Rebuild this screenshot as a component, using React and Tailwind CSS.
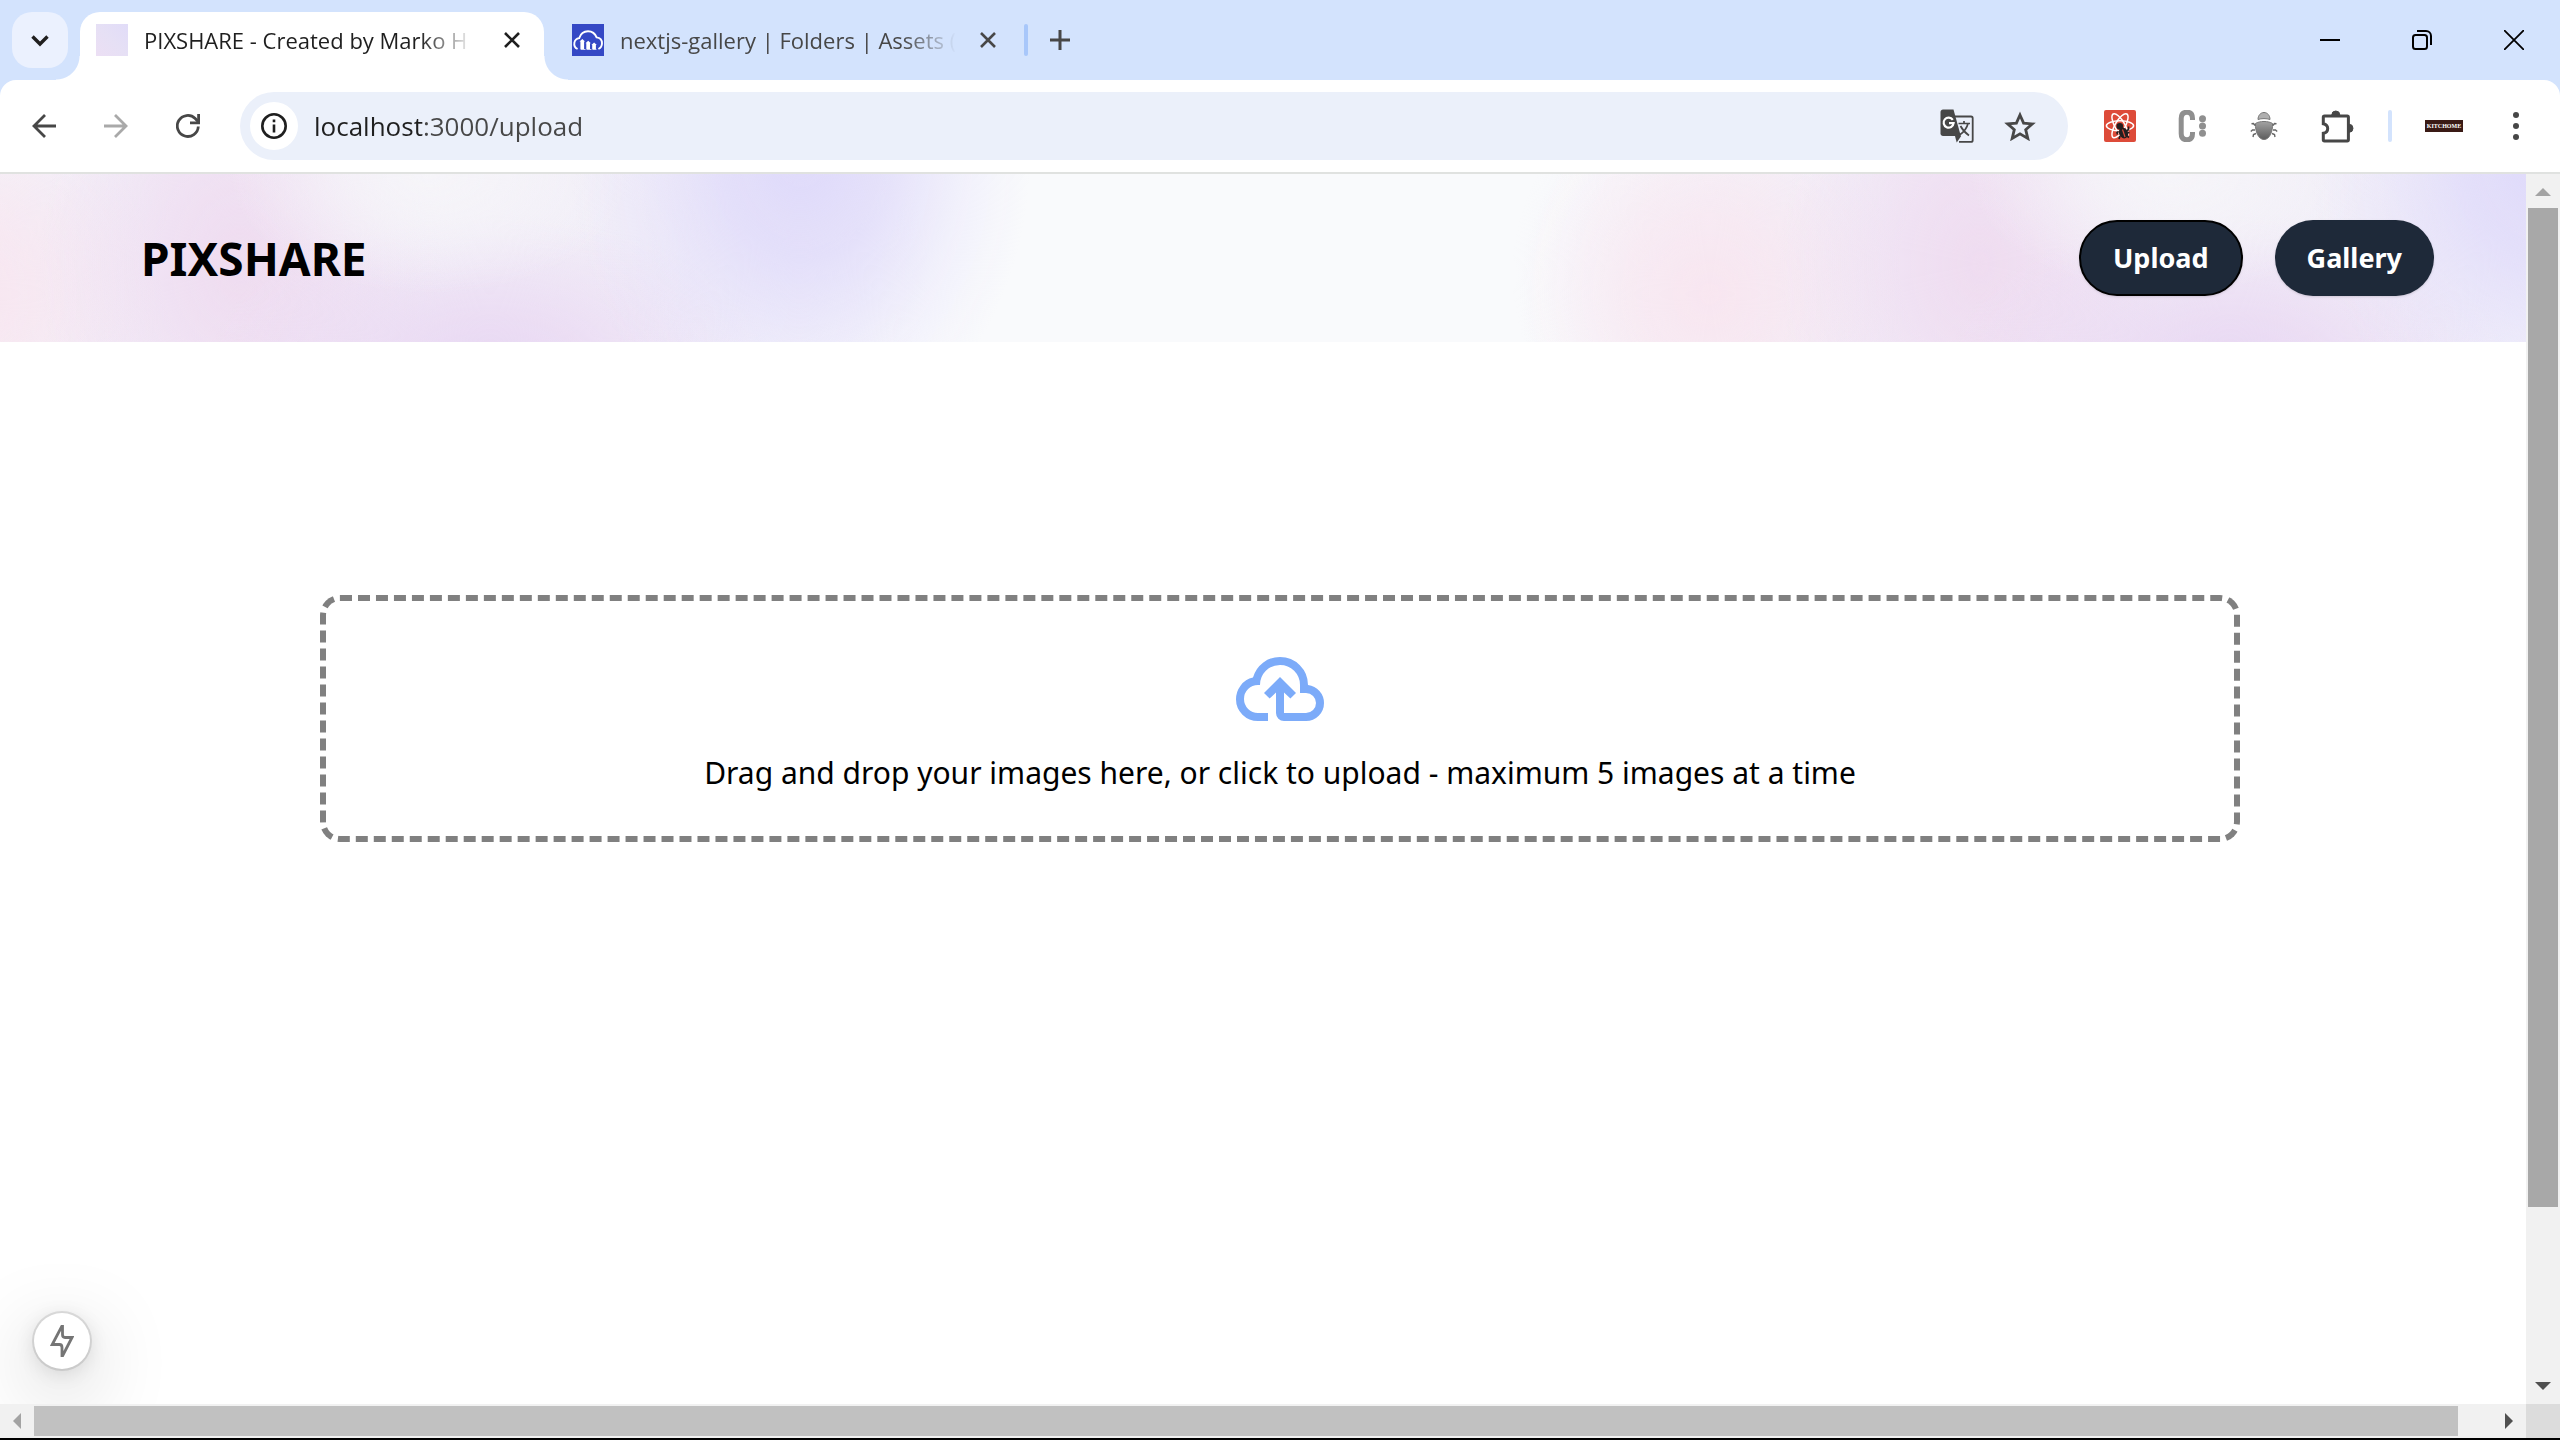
import React from "react";

function ChevronDown() {
  return (
    <svg viewBox="0 0 24 24" className="size-6" fill="none" stroke="#1f1f1f" strokeWidth="3.4">
      <path d="M4.5 8.5 12 16l7.5-7.5" />
    </svg>
  );
}

function Cross({ color }) {
  return (
    <svg viewBox="0 0 16 16" className="size-4" fill="none" stroke={color} strokeWidth="2.6">
      <path d="M1 1l14 14M15 1 1 15" />
    </svg>
  );
}

function CloudTile() {
  return (
    <svg viewBox="0 0 32 32" className="size-8 shrink-0">
      <rect width="32" height="32" fill="#3448c5" />
      <path
        d="M5.6 25C2.6 23.6 2 20.700 2.400 18.600c.5-2.600 2.300-4.100 4.800-4.500C8.600 9.800 11.800 7.200 16 7.200c4 0 7.200 2.400 8.600 6.200 3.200.4 5.400 2.800 5.400 5.900 0 2.700-1.400 4.700-3.600 5.700"
        fill="none"
        stroke="#fff"
        strokeWidth="1.900"
      />
      <path
        d="M10.300 15 13 17.500h-.9v7.500h1.400v.8H9.200c-.5 0-.8-.3-.8-.8v-7.500h-.9zM16.200 16.800l2.700 2.500H18V25h1.400v.8h-4.300c-.5 0-.8-.3-.8-.8v-5.700h-.8zM22.100 18.600l2.700 2.500h-.9V25h.5v.8h-3.400c-.5 0-.8-.3-.8-.8v-3.900h-.8z"
        fill="#fff"
      />
    </svg>
  );
}

function Arrow({ color, flip }) {
  return (
    <svg
      viewBox="0 0 24 24"
      className={flip ? "size-6 rotate-180" : "size-6"}
      fill="none"
      stroke={color}
      strokeWidth="2.800"
    >
      <path d="M24 12H2M13 1 2 12l11 11" />
    </svg>
  );
}

function Reload() {
  return (
    <svg viewBox="0 0 24 24" className="size-6" fill="none" stroke="#474747" strokeWidth="2.800">
      <path d="M22.300 12.500a10.500 10.500 0 1 1-3.100-8L22.500 8" />
      <path d="M22.600 0v8.800H14" />
    </svg>
  );
}

function Info() {
  return (
    <svg viewBox="0 0 26 26" className="size-[26px]" fill="none" stroke="#1f1f1f" strokeWidth="2.600">
      <circle cx="13" cy="13" r="11.700" />
      <path d="M13 11.500v8M13 6.500v2.800" />
    </svg>
  );
}

function Translate() {
  return (
    <svg viewBox="0 0 34 34" className="size-[34px]">
      <path d="M15 7.500h16c1 0 1.700.7 1.700 1.700v22c0 1-.7 1.700-1.700 1.700H19" fill="none" stroke="#474747" strokeWidth="1.800" />
      <path d="M3 .5h10.500l7.300 26.500H3c-1.400 0-2.500-1.100-2.500-2.500V3C.5 1.600 1.600.5 3 .5z" fill="#474747" />
      <path d="M15 27h6.200l-4.500 6.500z" fill="#474747" />
      <path d="M12.800 10.800a5 5 0 1 0 .8 3.400H9" fill="none" stroke="#fff" strokeWidth="2.200" />
      <path d="M18.500 14.500h11.500M24 12v2.500M28 14.500c-1.200 5-4 8.500-8.500 11.500M20.500 17c2 4 5 7 8.500 9.500" fill="none" stroke="#474747" strokeWidth="1.700" />
    </svg>
  );
}

function Star() {
  return (
    <svg viewBox="0 0 32 30" className="h-[30px] w-8">
      <path
        d="m16 4 3.600 8.100 8.800.8-6.700 5.800 2.100 8.700-7.800-4.600-7.800 4.600 2.100-8.700-6.700-5.800 8.800-.8z"
        fill="none"
        stroke="#474747"
        strokeWidth="2.800"
      />
    </svg>
  );
}

function ReactBug() {
  return (
    <svg viewBox="0 0 32 32" className="size-8">
      <rect width="32" height="32" rx="2" fill="#dd4b39" />
      <g fill="none" stroke="#fff" strokeWidth="1.500">
        <ellipse cx="16" cy="15.800" rx="13.600" ry="5" />
        <ellipse cx="16" cy="15.800" rx="13.600" ry="5" transform="rotate(60 16 15.800)" />
        <ellipse cx="16" cy="15.800" rx="13.600" ry="5" transform="rotate(120 16 15.800)" />
      </g>
      <path d="M14 21h9.500l1.500 8h-7z" fill="#dd4b39" />
      <g fill="#231f20" stroke="#231f20" strokeWidth="1.600">
        <circle cx="15.800" cy="16.300" r="2.500" />
        <ellipse cx="19.500" cy="23" rx="3.600" ry="4.800" transform="rotate(-24 19.500 23)" />
        <path d="m14.500 21.500-1.500 1 .5 2M16 26l-1 3M24.500 16.500v3l-2 1.500M25.500 22.500l-2 .5M23 26l2 1.500" fill="none" />
      </g>
      <path d="m18.500 19.500 2.500 7.500" stroke="#dd4b39" strokeWidth="1.200" />
    </svg>
  );
}

function CDots() {
  return (
    <svg viewBox="0 0 28 32" className="h-8 w-7">
      <path
        d="M14.500 10V8.500c0-4-1.700-6.300-5.500-6.300S3.200 4.500 3.200 8.500v15c0 4 2 6.300 5.800 6.300s5.500-2.300 5.500-6.300V22"
        fill="none"
        stroke="#8f8f8f"
        strokeWidth="5"
      />
      <g fill="#8f8f8f">
        <circle cx="24.500" cy="8.800" r="3.500" />
        <circle cx="24.500" cy="16" r="3.500" />
        <circle cx="24.500" cy="23.200" r="3.500" />
      </g>
    </svg>
  );
}

function Beetle() {
  return (
    <svg viewBox="0 0 28 30" className="h-[30px] w-7">
      <defs>
        <linearGradient id="shell" x1="0" y1="0" x2="0" y2="1">
          <stop offset="0" stopColor="#a3a3a3" />
          <stop offset="1" stopColor="#5c5c5c" />
        </linearGradient>
      </defs>
      <path d="M8 8.500C8 4.500 10.500 1.500 14 1.500s6 3 6 7c-3.500-1.200-8.500-1.200-12 0z" fill="#b0b0b0" stroke="#777" />
      <path d="M5.500 12.500c4-2.700 13-2.700 17 0 .5 8-3 16-8.500 16s-9-8-8.500-16z" fill="url(#shell)" stroke="#777" />
      <path
        d="M5 14.500 3.500 12.500l-2 .3M5 19H2.500L.8 20.500M6 22.500l-2.500 1-.5 2.500M23 14.500l1.500-2 2 .3M23 19h2.500l1.700 1.500M22 22.500l2.500 1 .5 2.500"
        fill="none"
        stroke="#666"
        strokeWidth="1.400"
      />
    </svg>
  );
}

function Puzzle() {
  return (
    <svg viewBox="0 0 33 33" className="size-[33px]">
      <path
        d="M3.500 6h22.700c.7 0 1.200.5 1.200 1.200v22.600c0 .7-.5 1.200-1.200 1.200H3.500c-.7 0-1.200-.5-1.200-1.200v-6.500c3-.6 4.400-2.400 4.400-4.800s-1.400-4.200-4.400-4.800V7.200C2.300 6.500 2.800 6 3.500 6z"
        fill="none"
        stroke="#474747"
        strokeWidth="3"
      />
      <path d="M10.800 5a4 4 0 0 1 8 0zM28 14.300a4 4 0 0 1 0 8z" fill="#474747" stroke="#474747" />
    </svg>
  );
}

function Minimize() {
  return (
    <svg viewBox="0 0 20 20" className="size-5" stroke="#000" strokeWidth="2">
      <path d="M0 10h20" />
    </svg>
  );
}

function Restore() {
  return (
    <svg viewBox="0 0 20 20" className="size-5" fill="none" stroke="#000" strokeWidth="2">
      <rect x="1" y="5" width="14" height="14" rx="2.500" />
      <path d="M5 1h9a5 5 0 0 1 5 5v9" />
    </svg>
  );
}

function CloseWindow() {
  return (
    <svg viewBox="0 0 20 20" className="size-5" fill="none" stroke="#000" strokeWidth="1.800">
      <path d="M0 0l20 20M20 0 0 20" />
    </svg>
  );
}

function Tab({ title, icon, active }) {
  return (
    <div
      className={
        active
          ? "relative flex h-full w-[464px] items-start rounded-t-[20px] bg-white pr-6 pl-4 before:absolute before:bottom-0 before:-left-6 before:size-6 before:bg-[radial-gradient(circle_at_top_left,transparent_23px,white_24px)] after:absolute after:-right-6 after:bottom-0 after:size-6 after:bg-[radial-gradient(circle_at_top_right,transparent_23px,white_24px)]"
          : "flex h-full w-[464px] items-start pl-7 pr-3"
      }
    >
      <div className="flex h-14 w-full items-center">
        {icon}
        <span
          className={
            active
              ? "ml-4 min-w-0 flex-1 overflow-hidden text-[22px] leading-8 whitespace-nowrap text-[#1f1f1f] [mask-image:linear-gradient(to_right,black_82%,transparent_98%)]"
              : "ml-4 min-w-0 flex-1 overflow-hidden text-[22px] leading-8 whitespace-nowrap text-[#474747] [mask-image:linear-gradient(to_right,black_84%,transparent)]"
          }
        >
          {title}
        </span>
        <button aria-label="Close tab" className="ml-6">
          <Cross color={active ? "#1f1f1f" : "#474747"} />
        </button>
      </div>
    </div>
  );
}

function TabStrip() {
  return (
    <div className="flex h-20 items-stretch bg-[#d3e3fd] pt-3">
      <button aria-label="Search tabs" className="mr-3 ml-3 flex size-14 items-center justify-center rounded-[20px] bg-[#ebf1fe]">
        <ChevronDown />
      </button>
      <Tab
        active
        title="PIXSHARE - Created by Marko H"
        icon={<span className="size-8 shrink-0 bg-linear-to-tr from-[#ecdff4] via-[#e6e0f5] to-[#e1dcf8]" />}
      />
      <Tab title="nextjs-gallery | Folders | Assets (" icon={<CloudTile />} />
      <div className="flex h-14 items-center">
        <span className="ml-4 h-8 w-1 rounded-full bg-[#a8c7fa]" />
        <button aria-label="New tab" className="ml-[22px]">
          <svg viewBox="0 0 20 20" className="size-5" stroke="#474747" strokeWidth="3">
            <path d="M10 0v20M0 10h20" />
          </svg>
        </button>
      </div>
      <div className="ml-auto flex h-14 items-center gap-[72px] pr-9">
        <button aria-label="Minimize"><Minimize /></button>
        <button aria-label="Restore"><Restore /></button>
        <button aria-label="Close window"><CloseWindow /></button>
      </div>
    </div>
  );
}

function Toolbar() {
  return (
    <div className="bg-[#d3e3fd]">
      <div className="flex items-center rounded-t-2xl border-b-2 border-[#e0e2e0] bg-white py-3 pr-[41px] pl-8">
        <div className="flex items-center gap-12">
          <button aria-label="Back"><Arrow color="#474747" /></button>
          <button aria-label="Forward"><Arrow color="#a9a9a9" flip /></button>
          <button aria-label="Reload"><Reload /></button>
        </div>
        <div className="ml-10 flex h-[68px] min-w-0 flex-1 items-center rounded-full bg-[#ebf0fa] pr-8 pl-[10px]">
          <button aria-label="View site information" className="flex size-12 items-center justify-center rounded-full bg-white">
            <Info />
          </button>
          <input
            aria-label="Address"
            defaultValue="localhost:3000/upload"
            className="ml-4 min-w-0 flex-1 bg-[linear-gradient(90deg,#1f1f1f_109px,#474747_109px)] bg-clip-text text-[26px] leading-9 text-transparent outline-none"
          />
          <button aria-label="Translate this page"><Translate /></button>
          <button aria-label="Bookmark this tab" className="ml-[30px]"><Star /></button>
        </div>
        <div className="ml-9 flex items-center">
          <button aria-label="React extension"><ReactBug /></button>
          <button aria-label="C extension" className="ml-[42px]"><CDots /></button>
          <button aria-label="Beetle extension" className="ml-11"><Beetle /></button>
          <button aria-label="Extensions" className="ml-[43px]"><Puzzle /></button>
          <span className="ml-[34px] h-8 w-1 rounded-full bg-[#d3e3fd]" />
          <button
            aria-label="Profile"
            className="ml-[33px] flex h-3 w-[38px] items-center justify-center bg-[#3a1a15] font-['Liberation_Serif',serif] text-[6px] leading-none font-bold text-white"
          >
            KITCHOME
          </button>
          <button aria-label="Menu" className="ml-[50px]">
            <svg viewBox="0 0 6 30" className="h-[30px] w-[6px]" fill="#474747">
              <circle cx="3" cy="4" r="3" />
              <circle cx="3" cy="15" r="3" />
              <circle cx="3" cy="26" r="3" />
            </svg>
          </button>
        </div>
      </div>
    </div>
  );
}

function SiteHeader() {
  return (
    <header className="flex h-[168px] items-center justify-between bg-[#f9fafc] bg-[radial-gradient(ellipse_230px_300px_at_1340px_-20px,#dfdafa_0%,#e0dbfad0_35%,#e0dbfa40_75%,#e0dbfa00_100%),radial-gradient(ellipse_200px_120px_at_970px_0px,#f6f5f9_0%,#f6f5f9b0_40%,#f6f5f900_100%),radial-gradient(ellipse_280px_150px_at_1030px_190px,#e8d8f3_0%,#ead9f3c0_35%,#ead9f300_100%),radial-gradient(ellipse_200px_260px_at_780px_90px,#efdcf0_0%,#efdcf1b0_40%,#efdcf100_100%),radial-gradient(ellipse_190px_200px_at_510px_120px,#f8e6f0_0%,#f8e6f0b0_40%,#f8e6f000_100%),radial-gradient(ellipse_680px_400px_at_890px_100px,#f1edf7_0%,#f2eff8_45%,#f2eff800_85%)] bg-[length:1740px_168px] bg-[position:-540px_0px] pr-[92px] pl-[141px]">
      <a href="#home" className="text-[46px] leading-[56px] font-bold text-black">PIXSHARE</a>
      <nav className="flex items-center gap-8">
        <a
          href="#upload"
          className="flex h-[76px] items-center rounded-full border-2 border-black bg-gray-800 px-8 text-[27px] font-bold text-white shadow-sm"
        >
          Upload
        </a>
        <a href="#gallery" className="flex h-[76px] items-center rounded-full bg-gray-800 px-8 text-[27px] font-bold text-white shadow-sm">
          Gallery
        </a>
      </nav>
    </header>
  );
}

function Dropzone() {
  return (
    <label className="flex w-full flex-col items-center rounded-[20px] border-[6px] border-dashed border-[#808080] pt-10 pb-10 text-black">
      <svg viewBox="0 0 24 24" className="size-24" fill="#7cabf9">
        <path d="M6.500 20q-2.275 0-3.887-1.575T1 14.575q0-1.950 1.175-3.475T5.250 9.150q.625-2.300 2.500-3.725T12 4q2.925 0 4.963 2.038T19 11q1.725.2 2.863 1.488T23 15.500q0 1.875-1.312 3.188T18.500 20H13q-.825 0-1.412-.587T11 18v-5.150L9.400 14.400 8 13l4-4 4 4-1.400 1.400-1.600-1.550V18h5.500q1.050 0 1.775-.725T21 15.500t-.725-1.775T18.500 13H17v-2q0-2.075-1.463-3.538T12 6 8.463 7.463 7 11h-.5q-1.450 0-2.475 1.025T3 14.500t1.025 2.475T6.500 18H9v2z" />
      </svg>
      <span className="mt-3 text-[30px] leading-[47px]">
        Drag and drop your images here, or click to upload - maximum 5 images at a time
      </span>
      <input type="file" multiple accept="image/*" className="sr-only" />
    </label>
  );
}

function VerticalScrollbar() {
  return (
    <div className="flex w-[34px] shrink-0 flex-col items-center bg-[#f1f1f1]">
      <svg viewBox="0 0 34 34" className="size-[34px] shrink-0">
        <path d="M9 22h16l-8-8z" fill="#a3a3a3" />
      </svg>
      <div className="flex w-full flex-1 flex-col px-[2px]">
        <div className="h-[86%] bg-[#a8a8a8]" />
      </div>
      <svg viewBox="0 0 34 34" className="size-[34px] shrink-0">
        <path d="M9 12h16l-8 8z" fill="#505050" />
      </svg>
    </div>
  );
}

function HorizontalScrollbar() {
  return (
    <div className="flex h-[34px] shrink-0 bg-[#f1f1f1]">
      <svg viewBox="0 0 34 34" className="size-[34px] shrink-0">
        <path d="M21 9v16l-8-8z" fill="#a3a3a3" />
      </svg>
      <div className="flex-1 py-[2px]">
        <div className="h-full w-[98.600%] bg-[#c1c1c1]" />
      </div>
      <svg viewBox="0 0 34 34" className="size-[34px] shrink-0">
        <path d="M13 9v16l8-8z" fill="#505050" />
      </svg>
      <div className="w-[34px] shrink-0 bg-[#dcdcdc]" />
    </div>
  );
}

export default function App() {
  return (
    <div className="flex h-screen flex-col overflow-hidden border-b-2 border-black bg-white font-['Open_Sans','Noto_Sans',sans-serif]">
      <TabStrip />
      <Toolbar />
      <div className="flex min-h-0 flex-1">
        <div className="relative min-w-0 flex-1 overflow-hidden font-['Noto_Sans','Open_Sans',sans-serif]">
          <SiteHeader />
          <main className="w-screen px-[12.5vw] pt-[253px]">
            <Dropzone />
          </main>
          <button
            aria-label="Development tools"
            className="absolute bottom-[35px] left-[34px] flex size-14 items-center justify-center rounded-full bg-white shadow-[0_0_0_2px_rgba(0,0,0,0.1),0_22px_80px_0_rgba(0,0,0,0.25),0_4px_20px_0_rgba(0,0,0,0.12)]"
          >
            <svg viewBox="0 0 24 32" className="h-8 w-6" fill="none" stroke="#757575" strokeWidth="2.800">
              <path d="M12.500 0v9.500c0 2 .8 3 2.500 3h7L12 32v-9.500c0-2-.8-3-2.500-3h-7.300z" />
            </svg>
          </button>
        </div>
        <VerticalScrollbar />
      </div>
      <HorizontalScrollbar />
    </div>
  );
}
